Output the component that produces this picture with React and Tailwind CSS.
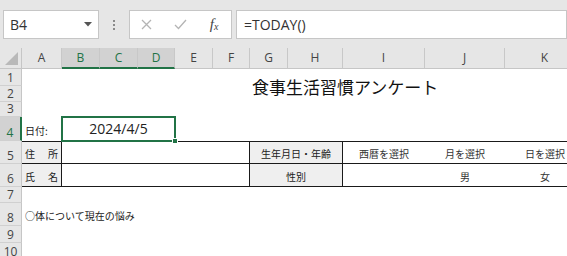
import React from "react";

const jp = { fontFamily: '"Noto Sans CJK JP", "Noto Sans", sans-serif' };
const ui = { fontFamily: '"Open Sans", "Noto Sans", sans-serif' };

const colHeaders = [
  { label: "A", cls: "col-start-2" },
  { label: "B", cls: "col-start-3", sel: true },
  { label: "C", cls: "col-start-4", sel: true },
  { label: "D", cls: "col-start-5", sel: true },
  { label: "E", cls: "col-start-6" },
  { label: "F", cls: "col-start-7" },
  { label: "G", cls: "col-start-8" },
  { label: "H", cls: "col-start-9" },
  { label: "I", cls: "col-start-10" },
  { label: "J", cls: "col-start-11" },
  { label: "K", cls: "col-start-12" },
];

const rowHeaders = [
  { label: "1", cls: "row-start-2" },
  { label: "2", cls: "row-start-3" },
  { label: "3", cls: "row-start-4" },
  { label: "4", cls: "row-start-5", sel: true },
  { label: "5", cls: "row-start-6" },
  { label: "6", cls: "row-start-7" },
  { label: "7", cls: "row-start-8" },
  { label: "8", cls: "row-start-9" },
  { label: "9", cls: "row-start-10" },
  { label: "10", cls: "row-start-11" },
];

function FormulaBar() {
  return (
    <div className="h-[48px] bg-[#e6e6e6] flex items-start pt-[10px] pl-[3px]" style={ui}>
      <div className="w-[96px] h-[29px] bg-white border border-[#c6c6c6] flex items-center justify-between pl-[6px] pr-[6px]">
        <span className="text-[14px] text-[#333]">B4</span>
        <svg width="8" height="5" viewBox="0 0 8 5">
          <path d="M0 0H8L4 4.5Z" fill="#555" />
        </svg>
      </div>
      <div className="w-[30px] h-[29px] flex flex-col items-center justify-center gap-[2px]">
        <span className="w-[2px] h-[2px] bg-[#8a8a8a]" />
        <span className="w-[2px] h-[2px] bg-[#8a8a8a]" />
        <span className="w-[2px] h-[2px] bg-[#8a8a8a]" />
      </div>
      <div className="w-[103px] h-[29px] bg-white border border-[#c6c6c6] flex items-center">
        <div className="w-[34px] flex justify-center">
          <svg width="11" height="11" viewBox="0 0 11 11">
            <path d="M1 1L10 10M10 1L1 10" stroke="#b4b4b4" strokeWidth="1.3" />
          </svg>
        </div>
        <div className="w-[34px] flex justify-center">
          <svg width="13" height="11" viewBox="0 0 13 11">
            <path d="M1 6L4.5 9.5L12 1" stroke="#b4b4b4" strokeWidth="1.3" fill="none" />
          </svg>
        </div>
        <div className="w-[34px] flex justify-center items-end text-[#444]" style={{ fontFamily: '"Liberation Serif", serif' }}>
          <span className="italic text-[15px] leading-none">f</span>
          <span className="italic text-[10px] leading-none">x</span>
        </div>
      </div>
      <div className="ml-[4px] flex-1 h-[29px] bg-white border border-[#c6c6c6] flex items-center pl-[7px]">
        <span className="text-[14px] text-[#333]">=TODAY()</span>
      </div>
    </div>
  );
}

function Sheet() {
  const line = "border-[#1a1a1a]";
  const gray = "bg-[#efefef]";
  return (
    <div
      className="grid grid-cols-[22px_40px_38px_38px_37px_38px_37px_38px_55px_82px_80px_80px] grid-rows-[21px_17px_16px_15px_24px_23px_23px_16px_23px_17px_17px] bg-white"
      style={jp}
    >
      {/* corner */}
      <div className="col-start-1 row-start-1 bg-[#e6e6e6] border-r border-b border-[#c6c6c6] flex items-end justify-end p-[3px]">
        <svg width="13" height="13" viewBox="0 0 13 13">
          <path d="M13 0V13H0Z" fill="#b9b9b9" />
        </svg>
      </div>

      {colHeaders.map((c) => (
        <div
          key={c.label}
          className={`${c.cls} row-start-1 flex items-center justify-center text-[12px] border-r border-[#c8c8c8] ${
            c.sel ? "bg-[#d2d2d2] text-[#217346] border-b-2 border-b-[#217346]" : "bg-[#e6e6e6] text-[#444] border-b border-b-[#c6c6c6]"
          }`}
          style={ui}
        >
          {c.label}
        </div>
      ))}

      {rowHeaders.map((r) => (
        <div
          key={r.label}
          className={`col-start-1 ${r.cls} flex items-end justify-center pb-[1px] text-[12px] leading-none border-b border-[#d0d0d0] ${
            r.sel ? "bg-[#d2d2d2] text-[#217346] border-r-2 border-r-[#217346]" : "bg-[#e6e6e6] text-[#444] border-r border-r-[#c6c6c6]"
          }`}
          style={ui}
        >
          {r.label}
        </div>
      ))}

      {/* title */}
      <div className="col-start-8 col-span-5 row-start-2 row-span-2 flex items-center pl-[2px] pt-[2px] whitespace-nowrap text-[17px] text-[#111]">
        食事生活習慣アンケート
      </div>

      {/* row 4 */}
      <div className="col-start-2 row-start-5 flex items-end pl-[3px] pb-[3px] text-[10px] text-[#222]">日付:</div>
      <div className="col-start-3 col-span-3 row-start-5 relative flex items-end justify-center pb-[2px] text-[14px] text-[#222]" style={ui}>
        2024/4/5
        <div className="absolute -left-[1px] -top-[1px] -right-[1px] -bottom-[1px] border-2 border-[#217346]" />
        <div className="absolute -right-[3px] -bottom-[3px] w-[6px] h-[6px] bg-[#217346] border border-white" />
      </div>

      {/* row 5 */}
      <div className={`col-start-2 row-start-6 ${gray} border-t border-b border-r ${line} flex items-center justify-between px-[3px] pt-[2px] text-[10px] text-[#222]`}>
        <span>住</span>
        <span>所</span>
      </div>
      <div className={`col-start-3 col-span-5 row-start-6 border-t border-b border-r ${line}`} />
      <div className={`col-start-8 col-span-2 row-start-6 ${gray} border-t border-b border-r ${line} flex items-center justify-center pt-[2px] text-[10px] text-[#222]`}>
        生年月日・年齢
      </div>
      <div className={`col-start-10 row-start-6 border-t border-b ${line} flex items-center justify-center pt-[2px] text-[10px] text-[#333]`}>西暦を選択</div>
      <div className={`col-start-11 row-start-6 border-t border-b ${line} flex items-center justify-center pt-[2px] text-[10px] text-[#333]`}>月を選択</div>
      <div className={`col-start-12 row-start-6 border-t border-b ${line} flex items-center justify-center pt-[2px] text-[10px] text-[#333]`}>日を選択</div>

      {/* row 6 */}
      <div className={`col-start-2 row-start-7 ${gray} border-b border-r ${line} flex items-center justify-between px-[3px] pt-[2px] text-[10px] text-[#222]`}>
        <span>氏</span>
        <span>名</span>
      </div>
      <div className={`col-start-3 col-span-5 row-start-7 border-b border-r ${line}`} />
      <div className={`col-start-8 col-span-2 row-start-7 ${gray} border-b border-r ${line} flex items-center justify-center pt-[2px] text-[10px] text-[#222]`}>
        性別
      </div>
      <div className={`col-start-10 row-start-7 border-b ${line}`} />
      <div className={`col-start-11 row-start-7 border-b ${line} flex items-center justify-center pt-[2px] text-[10px] text-[#333]`}>男</div>
      <div className={`col-start-12 row-start-7 border-b ${line} flex items-center justify-center pt-[2px] text-[10px] text-[#333]`}>女</div>

      {/* row 8 */}
      <div className="col-start-2 col-span-6 row-start-9 flex items-end pl-[3px] pb-[3px] whitespace-nowrap text-[10px] text-[#222]">
        ○体について現在の悩み
      </div>
    </div>
  );
}

export default function App() {
  return (
    <div className="w-[567px] h-[256px] overflow-hidden bg-white">
      <FormulaBar />
      <Sheet />
    </div>
  );
}
